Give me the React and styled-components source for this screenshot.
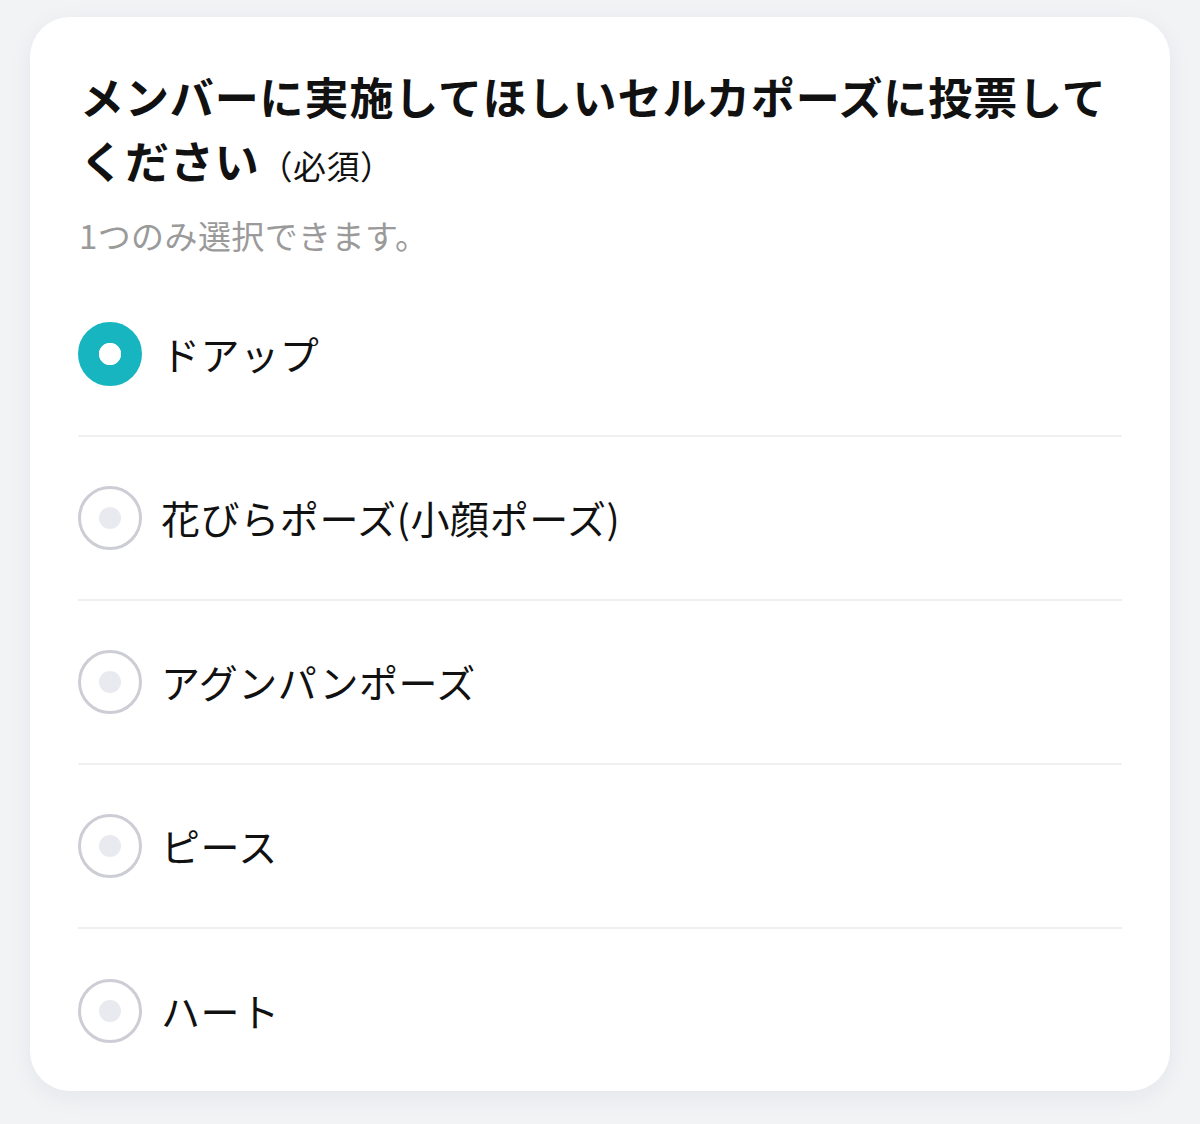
import React from "react";
import styled, { createGlobalStyle } from "styled-components";

const Global = createGlobalStyle`
  html, body { margin: 0; padding: 0; background: #f2f3f5; }
  body { font-family: "Noto Sans CJK JP", "Noto Sans", sans-serif; color: #111; }
`;

const Page = styled.div`
  width: 1200px;
  height: 1124px;
  box-sizing: border-box;
  padding: 17px 30px 0;
  background: #f2f3f5;
`;

const Card = styled.div`
  background: #fff;
  border-radius: 40px;
  box-shadow: 0 6px 24px rgba(20, 30, 60, 0.06);
  padding: 47px 48px 0 48px;
  height: 1074px;
  box-sizing: border-box;
`;

const Title = styled.h1`
  margin: 0 0 0 2px;
  font-size: 44px;
  line-height: 64px;
  font-weight: 700;
  letter-spacing: 0.9px;
  color: #111;
`;

const Required = styled.span`
  font-size: 33px;
  line-height: 1;
  font-weight: 400;
  letter-spacing: 0.5px;
`;

const Note = styled.p`
  margin: 19px 0 14px 1px;
  font-size: 33px;
  line-height: 48px;
  letter-spacing: 0.4px;
  color: #9a9a9a;
`;

const Options = styled.div`
  display: flex;
  flex-direction: column;
`;

const Row = styled.label`
  display: flex;
  align-items: center;
  gap: 19px;
  height: 164px;
  box-sizing: border-box;
  border-bottom: ${(p) => (p.$last ? "none" : "2px solid #f0f0f2")};
  cursor: pointer;
`;

const Radio = styled.span`
  flex: none;
  width: 64px;
  height: 64px;
  border-radius: 50%;
  box-sizing: border-box;
  display: flex;
  align-items: center;
  justify-content: center;
  border: ${(p) => (p.$checked ? "21px solid #17b5c0" : "3px solid #cdced5")};
  background: #fff;
  &::after {
    content: "";
    width: 22px;
    height: 22px;
    border-radius: 50%;
    background: ${(p) => (p.$checked ? "#fff" : "#e9eaf0")};
  }
`;

const Label = styled.span`
  font-size: 39px;
  line-height: 1;
  letter-spacing: 0.6px;
  color: #111;
  margin-top: -2px;
`;

const options = [
  "ドアップ",
  "花びらポーズ(小顔ポーズ)",
  "アグンパンポーズ",
  "ピース",
  "ハート",
];

export default function App() {
  const [selected, setSelected] = React.useState(0);
  return (
    <Page>
      <Global />
      <Card>
        <Title>
          メンバーに実施してほしいセルカポーズに投票して
          <br />
          ください
          <Required>（必須）</Required>
        </Title>
        <Note>1つのみ選択できます。</Note>
        <Options>
          {options.map((o, i) => (
            <Row key={o} $last={i === options.length - 1} onClick={() => setSelected(i)}>
              <Radio $checked={selected === i} />
              <Label>{o}</Label>
            </Row>
          ))}
        </Options>
      </Card>
    </Page>
  );
}
